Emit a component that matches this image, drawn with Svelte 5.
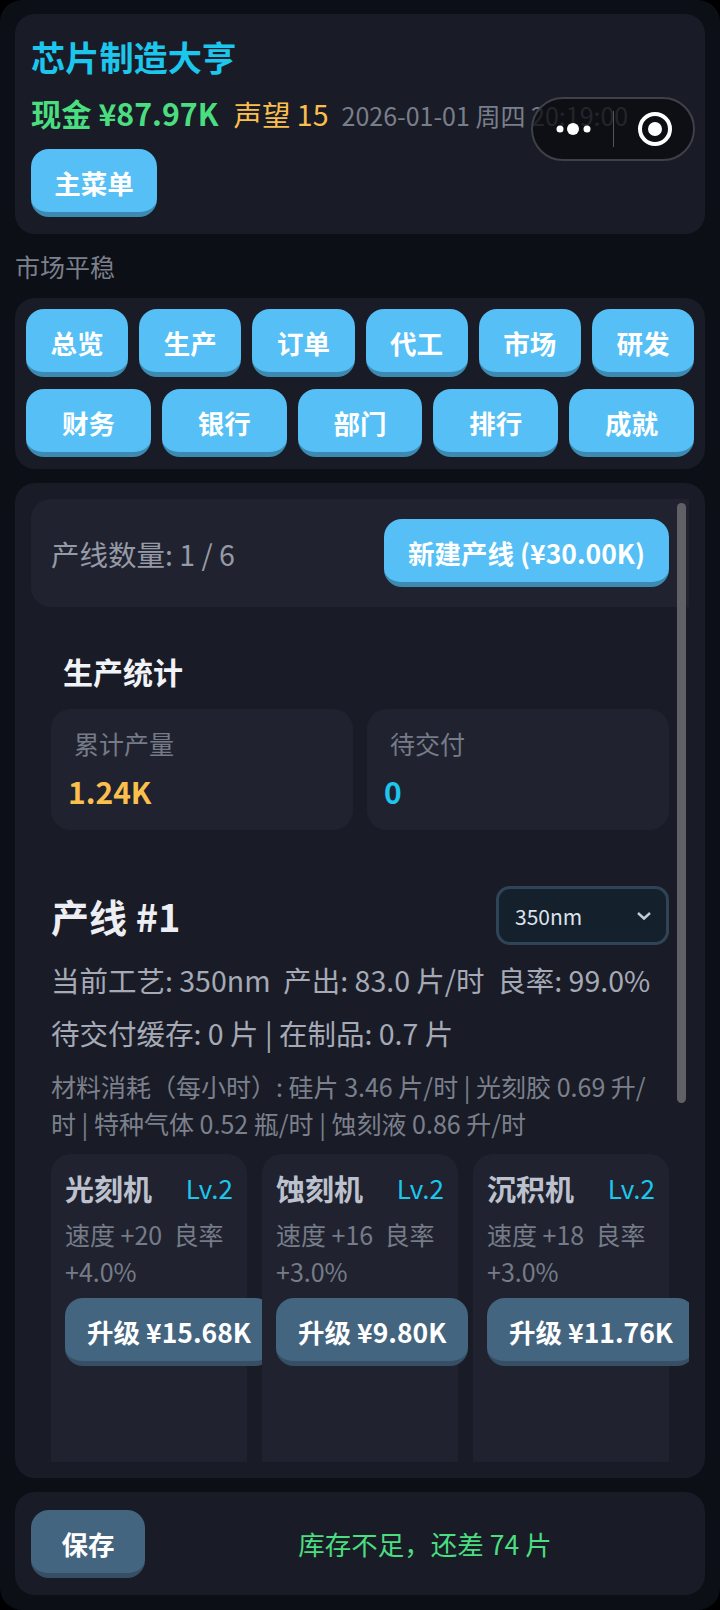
<script lang="ts">
  const tabs = ['总览', '生产', '订单', '代工', '市场', '研发', '财务', '银行', '部门', '排行', '成就'];
  const machines = [
    { name: '光刻机', level: 2, speed: 20, yieldUp: '4.0', cost: '15.68' },
    { name: '蚀刻机', level: 2, speed: 16, yieldUp: '3.0', cost: '9.80' },
    { name: '沉积机', level: 2, speed: 18, yieldUp: '3.0', cost: '11.76' },
  ];
</script>

<div class="page">
  <header class="panel top">
    <h1>芯片制造大亨</h1>
    <div class="stats">
      <span class="cash">现金 ¥87.97K</span>
      <span class="fame">声望 15</span>
      <span class="clock">2026-01-01 周四 20:19:00</span>
    </div>
    <button class="btn menu-btn">主菜单</button>
  </header>

  <div class="market">市场平稳</div>

  <nav class="panel tabs">
    {#each tabs as tab}
      <button class="btn tab">{tab}</button>
    {/each}
  </nav>

  <main class="panel content">
    <div class="scroller">
      <div class="line-count">
        <span>产线数量: 1 / 6</span>
        <button class="btn new-line">新建产线 (¥30.00K)</button>
      </div>

      <section class="summary">
        <h2>生产统计</h2>
        <div class="summary-grid">
          <div class="stat-card">
            <div class="stat-label">累计产量</div>
            <div class="stat-value amber">1.24K</div>
          </div>
          <div class="stat-card">
            <div class="stat-label">待交付</div>
            <div class="stat-value cyan">0</div>
          </div>
        </div>
      </section>

      <section class="line">
        <div class="line-head">
          <h3>产线 #1</h3>
          <div class="select">
            <span>350nm</span>
            <svg width="16" height="10" viewBox="0 0 16 10" fill="none" aria-hidden="true">
              <path d="M2 2l6 5.5L14 2" stroke="#c3ccd6" stroke-width="2.4" />
            </svg>
          </div>
        </div>
        <p class="info">当前工艺: 350nm&nbsp; 产出: 83.0 片/时&nbsp; 良率: 99.0%</p>
        <p class="info second">待交付缓存: 0 片 | 在制品: 0.7 片</p>
        <p class="materials">材料消耗（每小时）: 硅片 3.46 片/时 | 光刻胶 0.69 升/时 | 特种气体 0.52 瓶/时 | 蚀刻液 0.86 升/时</p>

        <div class="machines">
          {#each machines as m}
            <div class="machine">
              <div class="machine-head">
                <span class="machine-name">{m.name}</span>
                <span class="machine-level">Lv.{m.level}</span>
              </div>
              <div class="machine-desc">速度 +{m.speed}&nbsp; 良率 +{m.yieldUp}%</div>
              <button class="btn slate upgrade">升级 ¥{m.cost}K</button>
            </div>
          {/each}
        </div>
      </section>
    </div>
    <div class="scroll-thumb"></div>
  </main>

  <footer class="panel bottom">
    <button class="btn slate save">保存</button>
    <div class="toast">库存不足，还差 74 片</div>
  </footer>

  <div class="capsule">
    <svg width="46" height="14" viewBox="0 0 46 14" aria-hidden="true">
      <circle cx="6" cy="7" r="3.5" fill="#fff" />
      <circle cx="19" cy="7" r="6" fill="#fff" />
      <circle cx="33" cy="7" r="3.5" fill="#fff" />
    </svg>
    <i class="capsule-sep"></i>
    <svg width="36" height="36" viewBox="0 0 36 36" fill="none" aria-hidden="true">
      <circle cx="18" cy="18" r="15" stroke="#fff" stroke-width="4" />
      <circle cx="18" cy="18" r="7" fill="#fff" />
    </svg>
  </div>
</div>

<style>
  :global(body) {
    background: #000;
  }

  .page {
    position: relative;
    box-sizing: border-box;
    width: 720px;
    height: 1610px;
    padding: 14px 15px 15px;
    display: flex;
    flex-direction: column;
    background: #0c0f16;
    border-radius: 22px;
    overflow: hidden;
    font-family: 'Noto Sans CJK SC', 'Noto Sans', sans-serif;
    color: #e6e9f0;
  }

  .panel {
    background: #191c26;
    border-radius: 20px;
  }

  .btn {
    box-sizing: border-box;
    height: 68px;
    padding: 6px 24px 0;
    border: none;
    border-bottom: 5px solid #3d8ab0;
    border-radius: 18px;
    background: #55bff6;
    color: #fff;
    font-family: inherit;
    font-size: 26.5px;
    font-weight: 600;
    line-height: 1;
    white-space: nowrap;
  }

  .btn.slate {
    background: #44657f;
    border-bottom-color: #364f65;
  }

  .top {
    box-sizing: border-box;
    height: 220px;
    padding: 16px;
  }

  h1 {
    margin: 1px 0 0;
    font-size: 34.2px;
    line-height: 50px;
    font-weight: 700;
    color: #1cc6ec;
  }

  .stats {
    display: flex;
    align-items: baseline;
    margin-top: 10px;
    line-height: 44px;
    white-space: nowrap;
  }

  .cash {
    font-size: 30.3px;
    font-weight: 600;
    color: #4ade80;
  }

  .fame {
    margin-left: 15px;
    font-size: 28.5px;
    color: #fbbf4d;
  }

  .clock {
    margin-left: 13px;
    font-size: 25px;
    color: #7a7e8b;
  }

  .menu-btn {
    display: block;
    margin-top: 12px;
    width: 126px;
    padding: 6px 0 0;
  }

  .market {
    margin: 13px 0 13px;
    font-size: 25px;
    line-height: 38px;
    color: #7c808d;
  }

  .tabs {
    box-sizing: border-box;
    display: flex;
    flex-wrap: wrap;
    gap: 12px 11px;
    padding: 11px 11px 12px;
  }

  .tab {
    flex: 1 1 100px;
    padding: 6px 0 0;
  }

  .content {
    position: relative;
    flex: 1;
    min-height: 0;
    margin-top: 14px;
    padding: 16px;
  }

  .scroller {
    height: 100%;
    overflow: hidden;
  }

  .scroll-thumb {
    position: absolute;
    top: 20px;
    right: 19px;
    width: 9px;
    height: 600px;
    border-radius: 5px;
    background: #5f6167;
  }

  .line-count {
    box-sizing: border-box;
    height: 108px;
    padding: 0 20px;
    display: flex;
    align-items: center;
    justify-content: space-between;
    border-radius: 20px 0 0 20px;
    background: #20232f;
    font-size: 28.5px;
    color: #969aa6;
  }

  .summary {
    padding: 44px 20px 0;
  }

  h2 {
    margin: 0 0 18px;
    padding-left: 12px;
    font-size: 30px;
    line-height: 40px;
    font-weight: 700;
    color: #f1f3f7;
  }

  .summary-grid {
    display: grid;
    grid-template-columns: 1fr 1fr;
    gap: 14px;
  }

  .stat-card {
    box-sizing: border-box;
    height: 121px;
    padding: 16px 17px;
    border-radius: 20px;
    background: #20232f;
  }

  .stat-label {
    padding-left: 6px;
    font-size: 25px;
    line-height: 36px;
    color: #767b88;
  }

  .stat-value {
    margin-top: 10px;
    font-size: 30px;
    line-height: 40px;
    font-weight: 700;
  }

  .amber {
    color: #fbbf4d;
  }

  .cyan {
    color: #1cc6ec;
  }

  .line {
    padding: 56px 20px 0;
  }

  .line-head {
    display: flex;
    align-items: center;
    justify-content: space-between;
  }

  h3 {
    margin: 0;
    font-size: 38px;
    line-height: 50px;
    font-weight: 700;
    color: #eceef3;
  }

  .select {
    box-sizing: border-box;
    display: flex;
    align-items: center;
    justify-content: space-between;
    width: 173px;
    height: 59px;
    padding: 0 14px 0 16px;
    border: 3px solid #2f4557;
    border-radius: 14px;
    background: #14202c;
    font-size: 21px;
    color: #dde3ea;
  }

  .info {
    margin: 13px 0 0;
    font-size: 28.5px;
    line-height: 44px;
    color: #a5aab6;
    white-space: nowrap;
  }

  .info.second {
    margin-top: 9px;
  }

  .materials {
    margin: 13px 0 0;
    font-size: 25px;
    line-height: 37px;
    color: #7c808d;
  }

  .machines {
    display: grid;
    grid-template-columns: repeat(3, 1fr);
    gap: 15px;
    margin-top: 12px;
  }

  .machine {
    position: relative;
    box-sizing: border-box;
    min-width: 0;
    height: 400px;
    padding: 14px;
    border-radius: 20px;
    background: #20232f;
  }

  .machine-head {
    display: flex;
    align-items: center;
    justify-content: space-between;
    line-height: 40px;
  }

  .machine-name {
    font-size: 29px;
    font-weight: 700;
    color: #bcc1cd;
  }

  .machine-level {
    font-size: 26px;
    color: #1cc6ec;
  }

  .machine-desc {
    margin-top: 8px;
    font-size: 25px;
    line-height: 37px;
    color: #767b88;
  }

  .upgrade {
    display: block;
    margin-top: 8px;
    width: max-content;
    padding: 6px 22px 0;
  }

  .bottom {
    box-sizing: border-box;
    display: flex;
    align-items: center;
    height: 103px;
    margin-top: 14px;
    padding: 0 16px;
  }

  .save {
    width: 114px;
    padding: 6px 0 0;
  }

  .toast {
    flex: 1;
    padding-left: 16px;
    text-align: center;
    font-size: 26.5px;
    color: #4ade80;
  }

  .capsule {
    position: absolute;
    top: 97px;
    left: 531px;
    box-sizing: border-box;
    width: 164px;
    height: 64px;
    display: flex;
    align-items: center;
    padding-left: 21px;
    border: 2px solid #3f4149;
    border-radius: 32px;
    background: rgba(12, 12, 16, 0.78);
  }

  .capsule-sep {
    width: 1px;
    height: 36px;
    margin: 0 23px 0 13px;
    background: #54555c;
  }
</style>
